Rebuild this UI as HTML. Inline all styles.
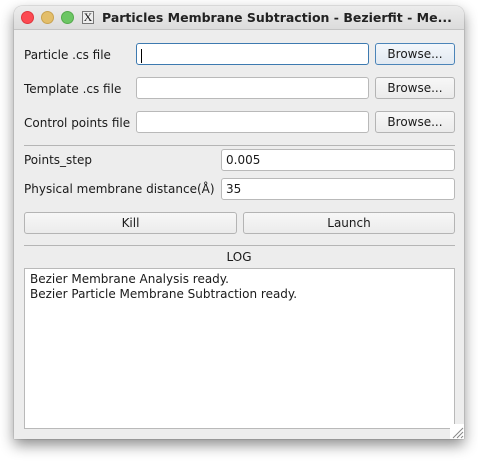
<!DOCTYPE html>
<html><head><meta charset="utf-8"><style>
*{box-sizing:border-box;margin:0;padding:0}
body{width:478px;height:461px;background:#fff;position:relative;overflow:hidden;font-family:"DejaVu Sans",sans-serif;font-size:12px;color:#1a1a1a}
.win{position:absolute;left:14px;top:6px;width:450px;height:433px;background:#ededed;border-radius:8px 8px 0 0;box-shadow:0 6px 14px rgba(0,0,0,.45),0 0 1px rgba(0,0,0,.5);overflow:hidden}
.tb{position:absolute;left:0;top:0;width:450px;height:24px;background:linear-gradient(#ececec,#dcdcdc);border-bottom:1px solid #c4c4c4}
.dot{position:absolute;top:5px;width:13px;height:13px;border-radius:50%}
.title{position:absolute;left:88px;top:4px;font-weight:bold;font-size:12.5px;color:#222;white-space:nowrap}
.x{position:absolute;left:68px;top:5px;width:12px;height:13px;border:1px solid #777;background:#eee;font-family:"Liberation Serif",serif;font-size:12px;line-height:11px;text-align:center}
.a{position:absolute}
.lbl{position:absolute;white-space:nowrap}
.in{position:absolute;background:#fff;border:1px solid #b9b9b9;border-radius:3px;padding-left:4px;line-height:22px}
.btn{position:absolute;border:1px solid #b4b4b4;border-radius:3px;background:linear-gradient(#f7f7f7,#ebebeb);text-align:center;line-height:21px}
.sep{position:absolute;left:10px;width:431px;height:1px;background:#b5b5b5}
</style></head><body>
<div class="win">
<div class="tb">
<div class="dot" style="left:7px;background:#fc4a52;border:1px solid #e0353d"></div>
<div class="dot" style="left:27px;background:#e3be6a;border:1px solid #c9a350"></div>
<div class="dot" style="left:47px;background:#6cc664;border:1px solid #54aa4c"></div>
<div class="x">X</div>
<div class="title">Particles Membrane Subtraction - Bezierfit - Me...</div>
</div>
<div class="lbl" style="left:10px;top:42px">Particle .cs file</div>
<div class="in" style="left:122px;top:37px;width:233px;height:22px;border-color:#3d7ab0"><span style="display:inline-block;width:1px;height:14px;background:#000;vertical-align:middle"></span></div>
<div class="btn" style="left:361px;top:37px;width:80px;height:22px;border-color:#4b84b8;background:linear-gradient(#f3f7fb,#e2e9f1)">Browse...</div>
<div class="lbl" style="left:10px;top:76px">Template .cs file</div>
<div class="in" style="left:122px;top:71px;width:233px;height:22px"></div>
<div class="btn" style="left:361px;top:71px;width:80px;height:22px">Browse...</div>
<div class="lbl" style="left:10px;top:110px">Control points file</div>
<div class="in" style="left:122px;top:105px;width:233px;height:22px"></div>
<div class="btn" style="left:361px;top:105px;width:80px;height:22px">Browse...</div>
<div class="sep" style="top:139px"></div>
<div class="lbl" style="left:10px;top:147px">Points_step</div>
<div class="in" style="left:207px;top:143px;width:234px;height:22px;line-height:21px">0.005</div>
<div class="lbl" style="left:10px;top:176px">Physical membrane distance(Å)</div>
<div class="in" style="left:207px;top:172px;width:234px;height:22px;line-height:21px">35</div>
<div class="btn" style="left:10px;top:206px;width:213px;height:22px">Kill</div>
<div class="btn" style="left:229px;top:206px;width:212px;height:22px">Launch</div>
<div class="sep" style="top:239px"></div>
<div class="lbl" style="left:0;width:450px;text-align:center;top:244px">LOG</div>
<div class="in" style="left:10px;top:262px;width:431px;height:161px;border-radius:0;padding:3px 5px;line-height:15px">Bezier Membrane Analysis ready.<br>Bezier Particle Membrane Subtraction ready.</div>
<svg class="a" style="left:436px;top:418px" width="14" height="15"><rect width="14" height="15" fill="#fff"/><path d="M3 14L13 4M7 14L13 8M11 14L13 12" stroke="#888" stroke-width="1"/></svg>
</div>
</body></html>
